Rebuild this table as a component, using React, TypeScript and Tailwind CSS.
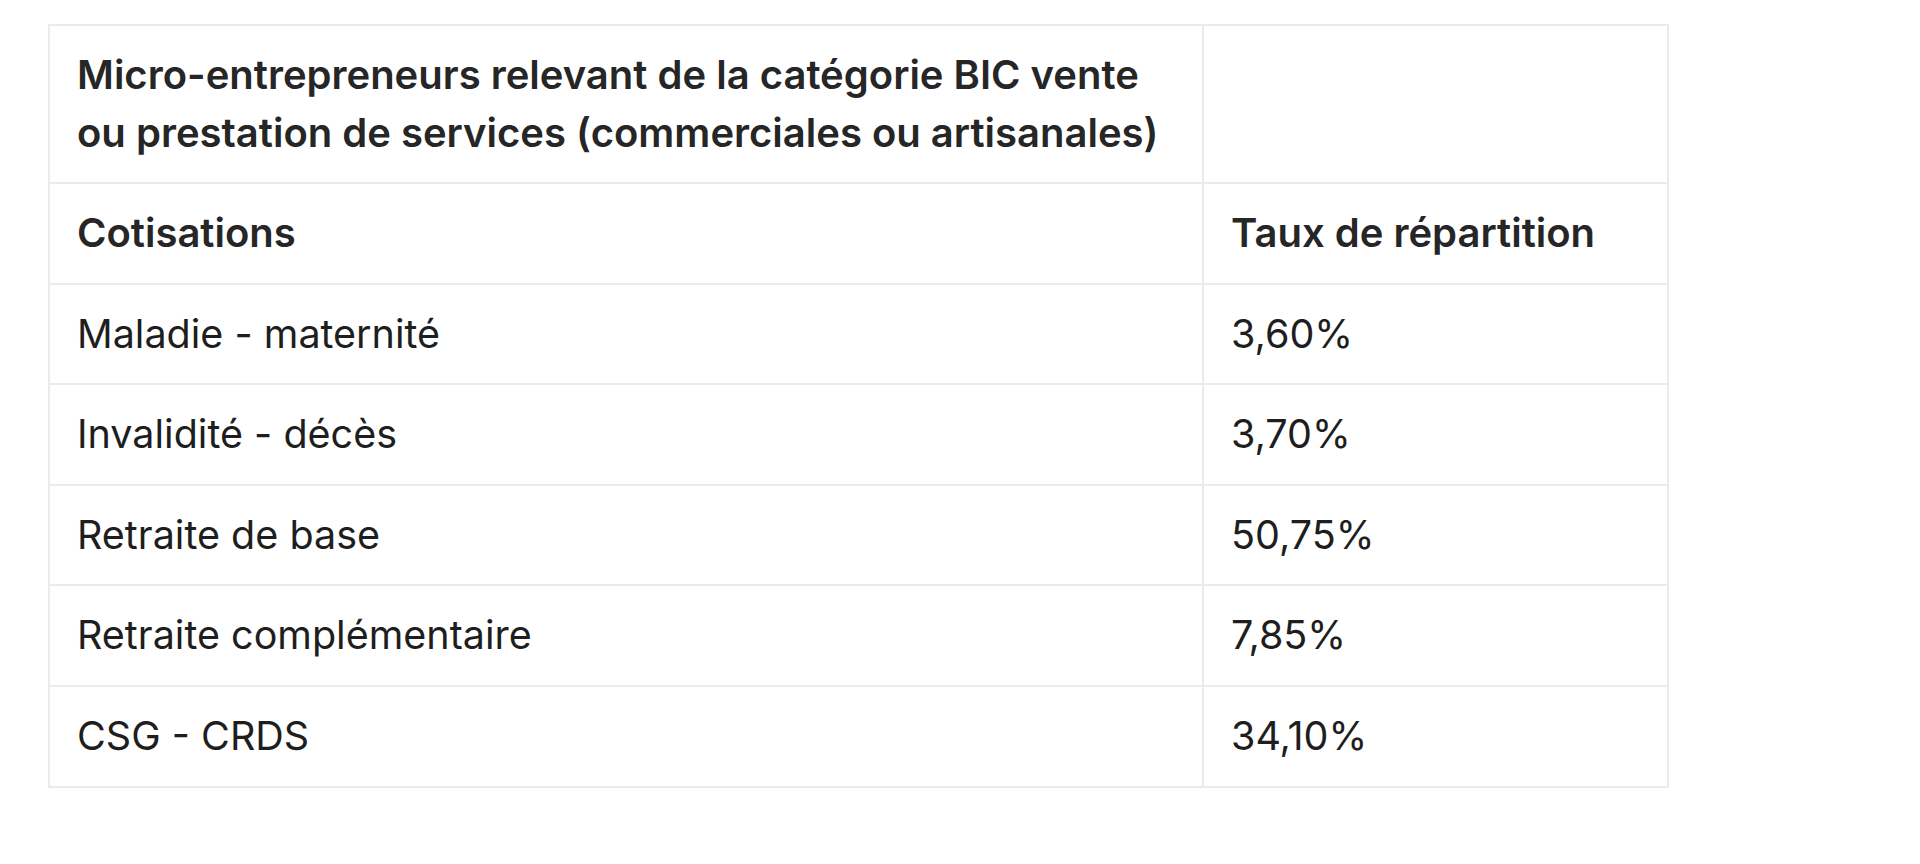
const rows = [
  { label: "Maladie - maternité", rate: "3,60%" },
  { label: "Invalidité - décès", rate: "3,70%" },
  { label: "Retraite de base", rate: "50,75%" },
  { label: "Retraite complémentaire", rate: "7,85%" },
  { label: "CSG - CRDS", rate: "34,10%" },
];

const cell = "border-2 border-[#ebebea] px-[27px] py-[20px] text-left align-middle";

export default function App() {
  return (
    <div className="min-h-screen bg-white pt-[24px] pl-[48px] font-['Inter',sans-serif] text-[40px] leading-[58.6px] text-[#1e1e1e]">
      <table className="w-[1621px] border-collapse">
        <colgroup>
          <col className="w-[1154px]" />
          <col />
        </colgroup>
        <thead>
          <tr>
            <th className={`${cell} leading-[58px] font-semibold text-[#262626]`}>
              Micro-entrepreneurs relevant de la catégorie BIC vente
              <br />
              ou prestation de services (commerciales ou artisanales)
            </th>
            <th className={cell}></th>
          </tr>
          <tr>
            <th className={`${cell} font-semibold text-[#262626]`}>Cotisations</th>
            <th className={`${cell} font-semibold text-[#262626]`}>Taux de répartition</th>
          </tr>
        </thead>
        <tbody>
          {rows.map((r) => (
            <tr key={r.label}>
              <td className={`${cell} text-[39.5px]`}>{r.label}</td>
              <td className={`${cell} text-[39.5px]`}>{r.rate}</td>
            </tr>
          ))}
        </tbody>
      </table>
    </div>
  );
}
